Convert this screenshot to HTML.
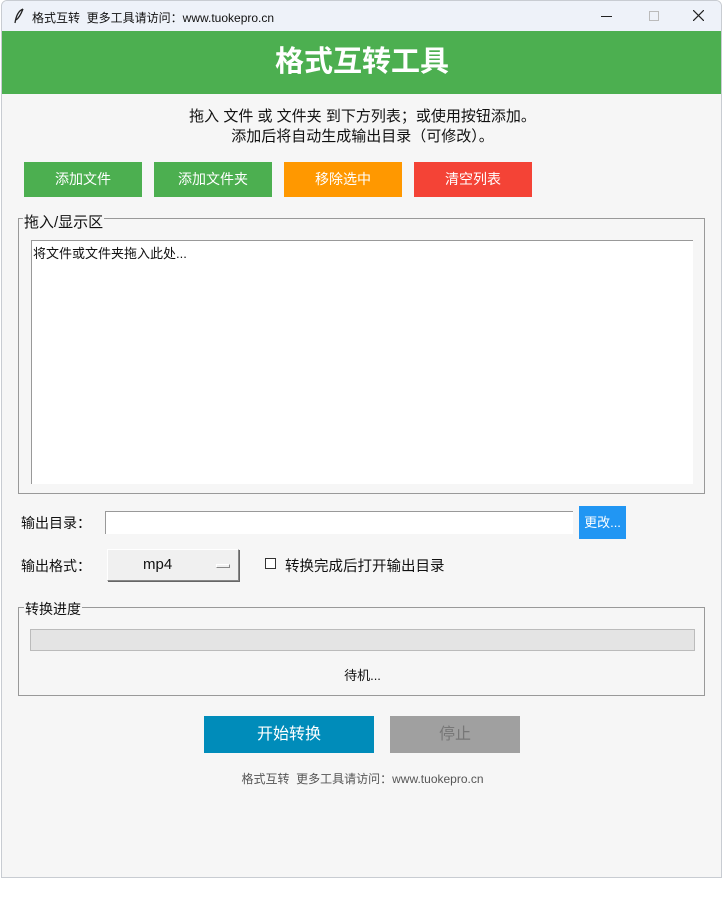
<!DOCTYPE html>
<html><head><meta charset="utf-8"><style>
*{margin:0;padding:0;box-sizing:border-box}
body{width:728px;height:897px;background:#fff;font-family:"Liberation Sans","Noto Sans CJK SC",sans-serif;font-size:14px;color:#111;position:relative;overflow:hidden}
.win{position:absolute;left:1px;top:0;width:721px;height:878px;background:#f6f6f6;border:1px solid #c8ccd2;border-radius:6px 6px 0 0;overflow:hidden}
.a{position:absolute}
.title{left:0;top:0;width:721px;height:30px;background:#eef2f9;font-size:12px}
.hdr{left:0;top:30px;width:720px;height:63px;background:#4caf50;color:#fff;font-size:29px;font-weight:bold;text-align:center;line-height:63px}
.btn{color:#fff;font-size:14px;text-align:center;line-height:35px;height:35px;width:118px;top:161px}
.grp{border:1px solid #999;}
.lbl{background:#f6f6f6;padding:0 1px;font-size:14px}
</style></head><body>
<div class="win">
<div class="a title">
<svg class="a" style="left:11px;top:7px" width="12" height="16" viewBox="0 0 12 16"><path d="M10 1 C5 3 3 8 2 15 M10 1 C8 6 6 10 3 12" stroke="#222" stroke-width="1.3" fill="none"/></svg>
<div class="a" style="left:30px;top:8px">格式互转&nbsp; 更多工具请访问：www.tuokepro.cn</div>
<div class="a" style="left:599px;top:15px;width:11px;height:1px;background:#222"></div>
<div class="a" style="left:647px;top:10px;width:10px;height:10px;border:1px solid #bbb"></div>
<svg class="a" style="left:691px;top:9px" width="11" height="11"><path d="M0 0L11 11M11 0L0 11" stroke="#222" stroke-width="1.2"/></svg>
</div>
<div class="a hdr">格式互转工具</div>
<div class="a" style="left:0;width:721px;top:106px;text-align:center;line-height:20px;font-size:15px">拖入 文件 或 文件夹 到下方列表；或使用按钮添加。<br>添加后将自动生成输出目录（可修改）。</div>
<div class="a btn" style="left:22px;background:#4caf50">添加文件</div>
<div class="a btn" style="left:152px;background:#4caf50">添加文件夹</div>
<div class="a btn" style="left:282px;background:#ff9800">移除选中</div>
<div class="a btn" style="left:412px;background:#f44336">清空列表</div>
<div class="a grp" style="left:16px;top:217px;width:687px;height:276px"></div>
<div class="a lbl" style="left:21px;top:210px;font-size:15px">拖入/显示区</div>
<div class="a" style="left:29px;top:239px;width:662px;height:244px;background:#fff;border-top:1px solid #999;border-left:1px solid #999;font-size:13px;padding:2px 0 0 1px">将文件或文件夹拖入此处...</div>
<div class="a" style="left:19px;top:512px">输出目录：</div>
<div class="a" style="left:103px;top:510px;width:468px;height:23px;background:#fff;border-top:1px solid #999;border-left:1px solid #999"></div>
<div class="a" style="left:577px;top:505px;width:47px;height:33px;background:#2196f3;color:#fff;font-size:13px;line-height:33px;text-align:center">更改...</div>
<div class="a" style="left:19px;top:555px">输出格式：</div>
<div class="a" style="left:105px;top:548px;width:132px;height:32px;background:#f0f0f0;border:1px solid #888;border-top-color:#fff;border-left-color:#fff;box-shadow:1px 1px 0 #666;font-size:15px;line-height:30px;padding-left:35px">mp4
<div class="a" style="left:108px;top:14px;width:14px;height:4px;border:1px solid #888;border-top-color:#fff;border-left-color:#fff"></div></div>
<div class="a" style="left:263px;top:557px;width:11px;height:11px;border:1px solid #333;background:#fff"></div>
<div class="a" style="left:283px;top:554px;font-size:14.5px">转换完成后打开输出目录</div>
<div class="a grp" style="left:16px;top:606px;width:687px;height:89px"></div>
<div class="a lbl" style="left:22px;top:598px">转换进度</div>
<div class="a" style="left:28px;top:628px;width:665px;height:22px;background:#e4e4e4;border:1px solid #bbb"></div>
<div class="a" style="left:0;width:721px;top:664px;text-align:center;font-size:13px">待机...</div>
<div class="a" style="left:202px;top:715px;width:170px;height:37px;background:#008cba;color:#fff;font-size:16px;line-height:37px;text-align:center">开始转换</div>
<div class="a" style="left:388px;top:715px;width:130px;height:37px;background:#a0a0a0;color:#777;font-size:16px;line-height:37px;text-align:center">停止</div>
<div class="a" style="left:0;width:721px;top:769px;text-align:center;font-size:12px;color:#555">格式互转&nbsp; 更多工具请访问：www.tuokepro.cn</div>
</div>
</body></html>
